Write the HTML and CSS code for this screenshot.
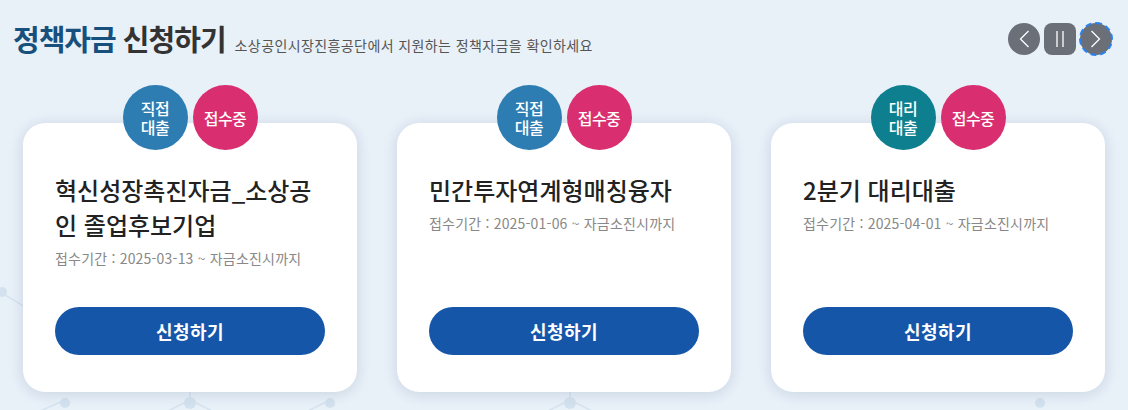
FILE: index.html
```html
<!DOCTYPE html>
<html lang="ko">
<head>
<meta charset="utf-8">
<title>정책자금 신청하기</title>
<link rel="stylesheet" href="styles.css">
</head>
<body>
<div class="page">
  <svg class="deco" width="1128" height="410" viewBox="0 0 1128 410" aria-hidden="true">
    <g stroke="#d6e3ee" stroke-width="1.5" fill="none">
      <line x1="0" y1="292" x2="30" y2="310"/>
      <line x1="65" y1="400" x2="20" y2="420"/>
      <line x1="190" y1="400" x2="150" y2="420"/>
      <line x1="190" y1="400" x2="230" y2="420"/>
      <line x1="330" y1="400" x2="290" y2="420"/>
      <line x1="570" y1="400" x2="530" y2="420"/>
      <line x1="570" y1="400" x2="610" y2="420"/>
      <line x1="570" y1="400" x2="570" y2="380"/>
      <line x1="190" y1="400" x2="190" y2="380"/>
    </g>
    <g fill="#d3e2ee">
      <circle cx="2" cy="292" r="5"/>
      <circle cx="65" cy="403" r="5"/>
      <circle cx="190" cy="403" r="6"/>
      <circle cx="330" cy="403" r="5"/>
      <circle cx="570" cy="403" r="6"/>
      <circle cx="1040" cy="403" r="5"/>
    </g>
  </svg>

  <header class="head">
    <div class="head-title">
      <h1 class="title"><span class="title-em">정책자금</span> 신청하기</h1>
      <p class="subtitle">소상공인시장진흥공단에서 지원하는 정책자금을 확인하세요</p>
    </div>
    <div class="controls">
      <button class="ctl ctl-round" aria-label="이전">
        <svg width="14" height="22" viewBox="0 0 14 22"><polyline points="11.5,3 3.5,11 11.5,19" fill="none" stroke="#fff" stroke-width="1.3"/></svg>
      </button>
      <button class="ctl ctl-square" aria-label="정지">
        <svg width="14" height="20" viewBox="0 0 14 20"><line x1="4" y1="2" x2="4" y2="18" stroke="#fff" stroke-width="1.3"/><line x1="10" y1="2" x2="10" y2="18" stroke="#fff" stroke-width="1.3"/></svg>
      </button>
      <button class="ctl ctl-round ctl-focus" aria-label="다음">
        <svg width="14" height="22" viewBox="0 0 14 22"><polyline points="2.5,3 10.5,11 2.5,19" fill="none" stroke="#fff" stroke-width="1.3"/></svg>
      </button>
    </div>
  </header>

  <section class="cards">
    <article class="card">
      <div class="badges">
        <span class="badge badge-direct"><span class="badge-line">직접</span><span class="badge-line">대출</span></span>
        <span class="badge badge-open">접수중</span>
      </div>
      <h2 class="card-title">혁신성장촉진자금_소상공인 졸업후보기업</h2>
      <p class="card-date">접수기간 : 2025-03-13 ~ 자금소진시까지</p>
      <a class="card-btn" href="#">신청하기</a>
    </article>
    <article class="card">
      <div class="badges">
        <span class="badge badge-direct"><span class="badge-line">직접</span><span class="badge-line">대출</span></span>
        <span class="badge badge-open">접수중</span>
      </div>
      <h2 class="card-title">민간투자연계형매칭융자</h2>
      <p class="card-date">접수기간 : 2025-01-06 ~ 자금소진시까지</p>
      <a class="card-btn" href="#">신청하기</a>
    </article>
    <article class="card">
      <div class="badges">
        <span class="badge badge-agency"><span class="badge-line">대리</span><span class="badge-line">대출</span></span>
        <span class="badge badge-open">접수중</span>
      </div>
      <h2 class="card-title">2분기 대리대출</h2>
      <p class="card-date">접수기간 : 2025-04-01 ~ 자금소진시까지</p>
      <a class="card-btn" href="#">신청하기</a>
    </article>
  </section>
</div>
</body>
</html>
```

FILE: styles.css
```css
* { box-sizing: border-box; }
html, body { margin: 0; padding: 0; }
body {
  background: #e8f0f8;
  font-family: "Noto Sans CJK KR", "Noto Sans", sans-serif;
  color: #222;
  width: 1128px;
  height: 410px;
  overflow: hidden;
}
.page {
  position: relative;
  width: 1128px;
  height: 410px;
}
.deco {
  position: absolute;
  left: 0;
  top: 0;
  z-index: 0;
}
.head {
  position: relative;
  z-index: 1;
  display: flex;
  justify-content: space-between;
  align-items: center;
  padding: 18px 16px 0 13px;
  height: 60px;
}
.head-title {
  display: flex;
  align-items: baseline;
  gap: 9px;
}
.title {
  margin: 0;
  font-size: 29px;
  font-weight: 700;
  letter-spacing: -1px;
  color: #333;
  line-height: 1;
}
.title-em { color: #17507c; }
.subtitle {
  margin: 0;
  font-size: 14px;
  letter-spacing: 0.4px;
  color: #555;
}
.controls {
  display: flex;
  gap: 4px;
  align-items: center;
}
.ctl {
  width: 32px;
  height: 32px;
  border: 0;
  padding: 0;
  background: #6a6f78;
  display: flex;
  align-items: center;
  justify-content: center;
}
.ctl-round { border-radius: 50%; }
.ctl-square { border-radius: 8px; }
.ctl-focus {
  outline: 2px dashed #2a82f0;
  outline-offset: -1px;
}
.cards {
  position: relative;
  z-index: 1;
  display: flex;
  gap: 40px;
  padding: 25px 0 0 23px;
}
.card {
  position: relative;
  width: 334px;
  height: 269px;
  margin-top: 38px;
  background: #fff;
  border-radius: 22px;
  box-shadow: 0 2px 14px rgba(40, 70, 110, 0.16);
  padding: 49px 32px 37px;
  display: flex;
  flex-direction: column;
}
.badges {
  position: absolute;
  top: -38px;
  left: 0;
  right: 0;
  display: flex;
  justify-content: center;
  gap: 5px;
}
.badge {
  width: 65px;
  height: 65px;
  border-radius: 50%;
  color: #fff;
  display: flex;
  flex-direction: column;
  align-items: center;
  justify-content: center;
  text-align: center;
  font-size: 16px;
  line-height: 20px;
  font-weight: 500;
  letter-spacing: -0.5px;
}
.badge-line { display: block; line-height: 19px; }
.badge-direct { background: #2e7db2; }
.badge-agency { background: #0d7f8e; }
.badge-open { background: #d92e70; }
.card-title {
  margin: 0;
  font-size: 24px;
  font-weight: 500;
  line-height: 35px;
  color: #222;
  letter-spacing: 0;
}
.card-date {
  margin: 6px 0 0;
  font-size: 14px;
  color: #888;
  letter-spacing: 0.2px;
}
.card-btn {
  margin-top: auto;
  height: 48px;
  border-radius: 24px;
  background: #1556a8;
  color: #fff;
  text-decoration: none;
  display: flex;
  align-items: center;
  justify-content: center;
  font-size: 18px;
  font-weight: 700;
  letter-spacing: 0.5px;
}
```
